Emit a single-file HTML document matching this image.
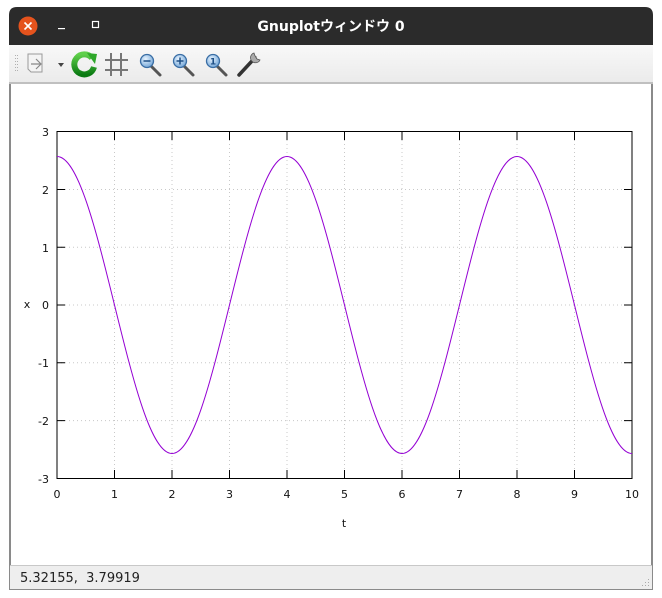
<!DOCTYPE html>
<html><head><meta charset="utf-8"><style>
html,body{margin:0;padding:0;background:#fff;width:662px;height:598px;overflow:hidden;font-family:"DejaVu Sans","Noto Sans CJK JP",sans-serif}
</style></head><body>
<svg width="662" height="598" viewBox="0 0 662 598" xmlns="http://www.w3.org/2000/svg" style="position:absolute;left:0;top:0">
<defs>
<linearGradient id="tb" x1="0" y1="0" x2="0" y2="1"><stop offset="0" stop-color="#f8f8f8"/><stop offset="1" stop-color="#ebebeb"/></linearGradient>
<radialGradient id="lens" cx="0.4" cy="0.35" r="0.7"><stop offset="0" stop-color="#e8f4ff"/><stop offset="1" stop-color="#6ea3d6"/></radialGradient>
<linearGradient id="grn" x1="0" y1="0" x2="0" y2="1"><stop offset="0" stop-color="#5fd04a"/><stop offset="1" stop-color="#0b7a12"/></linearGradient>
</defs>
<path d="M9,15 Q9,7 17,7 L645,7 Q653,7 653,15 L653,590 L9,590 Z" fill="#2b2b2b"/>
<rect x="9" y="45" width="644" height="37" fill="url(#tb)"/>
<rect x="9" y="82" width="644" height="2" fill="#c0c0c0"/>
<rect x="9" y="84" width="644" height="506" fill="#8a8a8a"/>
<rect x="11" y="84" width="640" height="481" fill="#fff"/>
<rect x="10" y="565" width="642" height="24" fill="#eeeeee"/>
<rect x="10" y="565" width="642" height="1" fill="#c8c8c8"/>
<circle cx="28" cy="26" r="9.5" fill="#e5531d"/>
<path d="M24.5,22.5 L31.5,29.5 M31.5,22.5 L24.5,29.5" stroke="#fff" stroke-width="1.6"/>
<rect x="58" y="28" width="7" height="1.2" fill="#fff"/>
<rect x="92.5" y="21.5" width="6" height="6" fill="none" stroke="#fff" stroke-width="1.2"/>
<text x="331" y="31" fill="#fff" font-size="14" font-weight="bold" text-anchor="middle" font-family="DejaVu Sans,Noto Sans CJK JP,sans-serif">Gnuplotウィンドウ 0</text>
<g fill="#b0b0b0"><rect x="15" y="55" width="1" height="1"/><rect x="15" y="58" width="1" height="1"/><rect x="15" y="61" width="1" height="1"/><rect x="15" y="64" width="1" height="1"/><rect x="15" y="67" width="1" height="1"/><rect x="15" y="70" width="1" height="1"/><rect x="17" y="55" width="1" height="1"/><rect x="17" y="58" width="1" height="1"/><rect x="17" y="61" width="1" height="1"/><rect x="17" y="64" width="1" height="1"/><rect x="17" y="67" width="1" height="1"/><rect x="17" y="70" width="1" height="1"/></g>
<path d="M28,54 L42,54 L42,72 L31,72 L28,69 Z" fill="#f4f4f4" stroke="#9a9a9a"/>
<path d="M36,59 L41,64 L36,69 M31,64 L41,64" fill="none" stroke="#888" stroke-width="1.2"/>
<path d="M58,63 L64,63 L61,67 Z" fill="#444"/>
<path d="M92,58 A10,10 0 1 0 94,67" fill="none" stroke="url(#grn)" stroke-width="6"/>
<path d="M87,53 L97,54 L95,64 Z" fill="#2ea72a"/>
<g stroke="#777" stroke-width="2"><path d="M111,53 V76 M121,53 V76 M105,60 H128 M105,70 H128"/></g>
<g>
<path d="M151,66 L160,75" stroke="#555" stroke-width="3" stroke-linecap="round"/>
<circle cx="147" cy="61" r="6.5" fill="url(#lens)" stroke="#3a6ea5" stroke-width="1.3"/>
<path d="M143.5,61 H150.5" stroke="#1d4f86" stroke-width="1.5"/>
<path d="M184,66 L193,75" stroke="#555" stroke-width="3" stroke-linecap="round"/>
<circle cx="180" cy="61" r="6.5" fill="url(#lens)" stroke="#3a6ea5" stroke-width="1.3"/>
<path d="M176.5,61 H183.5 M180,57.5 V64.5" stroke="#1d4f86" stroke-width="1.5"/>
<path d="M217,66 L226,75" stroke="#555" stroke-width="3" stroke-linecap="round"/>
<circle cx="213" cy="61" r="6.5" fill="url(#lens)" stroke="#3a6ea5" stroke-width="1.3"/>
<text x="213" y="64.5" font-size="9" font-weight="bold" fill="#1d4f86" text-anchor="middle">1</text>
</g>
<path d="M239,75 L252,61" stroke="#333" stroke-width="3.5" stroke-linecap="round"/>
<path d="M252,61 L256,56" stroke="#999" stroke-width="3"/>
<path d="M254,53 A5,5 0 1 0 260,60 L257,59 L255,56 Z" fill="#aaa" stroke="#555" stroke-width="0.8"/>
<g stroke="#c8c8c8" stroke-width="1" stroke-dasharray="1,3">
<path d="M114.5,132 V478 M172,132 V478 M229.5,132 V478 M287,132 V478 M344.5,132 V478 M402,132 V478 M459.5,132 V478 M517,132 V478 M574.5,132 V478"/>
<path d="M57,189.5 H632 M57,247.3 H632 M57,305 H632 M57,362.8 H632 M57,420.6 H632"/>
</g>
<g stroke="#000" stroke-width="1" fill="none">
<rect x="57" y="131.5" width="575" height="347"/>
<path d="M114.5,478 v-8 M172,478 v-8 M229.5,478 v-8 M287,478 v-8 M344.5,478 v-8 M402,478 v-8 M459.5,478 v-8 M517,478 v-8 M574.5,478 v-8"/>
<path d="M114.5,132 v8 M172,132 v8 M229.5,132 v8 M287,132 v8 M344.5,132 v8 M402,132 v8 M459.5,132 v8 M517,132 v8 M574.5,132 v8"/>
<path d="M57,189.5 h8 M57,247.3 h8 M57,305 h8 M57,362.8 h8 M57,420.6 h8"/>
<path d="M632,189.5 h-8 M632,247.3 h-8 M632,305 h-8 M632,362.8 h-8 M632,420.6 h-8"/>
</g>
<path d="M57,156.5 C77.81,156.5 95.75,228.93 114.5,305 C133.25,381.07 151.19,453.5 172,453.5 C192.81,453.5 210.75,381.07 229.5,305 C248.25,228.93 266.19,156.5 287,156.5 C307.81,156.5 325.75,228.93 344.5,305 C363.25,381.07 381.19,453.5 402,453.5 C422.81,453.5 440.75,381.07 459.5,305 C478.25,228.93 496.19,156.5 517,156.5 C537.81,156.5 555.75,228.93 574.5,305 C593.25,381.07 611.19,453.5 632,453.5" fill="none" stroke="#9400d3" stroke-width="1"/>
<g font-size="11" fill="#111" text-anchor="end" font-family="DejaVu Sans,sans-serif">
<text x="49" y="136">3</text><text x="49" y="194">2</text><text x="49" y="252">1</text><text x="49" y="309">0</text><text x="49" y="367">-1</text><text x="49" y="425">-2</text><text x="49" y="483">-3</text>
</g>
<g font-size="11" fill="#111" text-anchor="middle" font-family="DejaVu Sans,sans-serif">
<text x="57" y="498">0</text><text x="114.5" y="498">1</text><text x="172" y="498">2</text><text x="229.5" y="498">3</text><text x="287" y="498">4</text><text x="344.5" y="498">5</text><text x="402" y="498">6</text><text x="459.5" y="498">7</text><text x="517" y="498">8</text><text x="574.5" y="498">9</text><text x="632" y="498">10</text>
<text x="344" y="527">t</text><text x="27" y="308">x</text>
</g>
<text x="20" y="582" font-size="13" fill="#222" font-family="DejaVu Sans,sans-serif" xml:space="preserve">5.32155,  3.79919</text>
<g fill="#aaa"><rect x="648" y="585" width="1" height="1"/><rect x="645" y="585" width="1" height="1"/><rect x="642" y="585" width="1" height="1"/><rect x="648" y="582" width="1" height="1"/><rect x="645" y="582" width="1" height="1"/><rect x="648" y="579" width="1" height="1"/></g>
</svg>
</body></html>
